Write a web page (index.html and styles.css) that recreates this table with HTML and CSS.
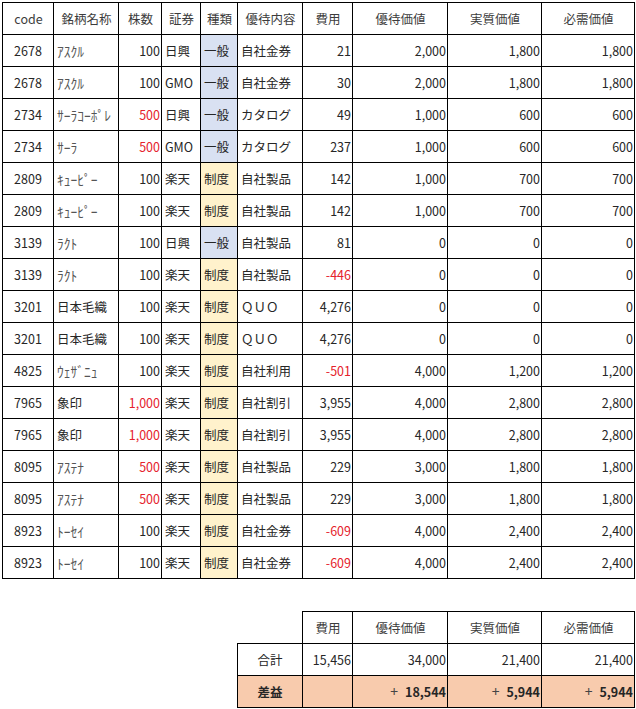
FILE: index.html
```html
<!DOCTYPE html>
<html lang="ja">
<head>
<meta charset="utf-8">
<title>優待一覧</title>
<link rel="stylesheet" href="styles.css">
</head>
<body>
<table class="sheet">
  <colgroup>
    <col class="w-code"><col class="w-name"><col class="w-qty"><col class="w-broker"><col class="w-kind"><col class="w-content"><col class="w-cost"><col class="w-val"><col class="w-val2"><col class="w-val3">
  </colgroup>
  <thead>
    <tr><th>code</th><th>銘柄名称</th><th>株数</th><th>証券</th><th>種類</th><th>優待内容</th><th>費用</th><th>優待価値</th><th>実質価値</th><th>必需価値</th></tr>
  </thead>
  <tbody>
    <tr><td class="c">2678</td><td class="nm">ｱｽｸﾙ</td><td class="r">100</td><td>日興</td><td class="ippan">一般</td><td>自社金券</td><td class="r">21</td><td class="r">2,000</td><td class="r">1,800</td><td class="r">1,800</td></tr>
    <tr><td class="c">2678</td><td class="nm">ｱｽｸﾙ</td><td class="r">100</td><td>GMO</td><td class="ippan">一般</td><td>自社金券</td><td class="r">30</td><td class="r">2,000</td><td class="r">1,800</td><td class="r">1,800</td></tr>
    <tr><td class="c">2734</td><td class="nm">ｻｰﾗｺｰﾎﾟﾚ</td><td class="r red">500</td><td>日興</td><td class="ippan">一般</td><td>カタログ</td><td class="r">49</td><td class="r">1,000</td><td class="r">600</td><td class="r">600</td></tr>
    <tr><td class="c">2734</td><td class="nm">ｻｰﾗ</td><td class="r red">500</td><td>GMO</td><td class="ippan">一般</td><td>カタログ</td><td class="r">237</td><td class="r">1,000</td><td class="r">600</td><td class="r">600</td></tr>
    <tr><td class="c">2809</td><td class="nm">ｷｭｰﾋﾟｰ</td><td class="r">100</td><td>楽天</td><td class="seido">制度</td><td>自社製品</td><td class="r">142</td><td class="r">1,000</td><td class="r">700</td><td class="r">700</td></tr>
    <tr><td class="c">2809</td><td class="nm">ｷｭｰﾋﾟｰ</td><td class="r">100</td><td>楽天</td><td class="seido">制度</td><td>自社製品</td><td class="r">142</td><td class="r">1,000</td><td class="r">700</td><td class="r">700</td></tr>
    <tr><td class="c">3139</td><td class="nm">ﾗｸﾄ</td><td class="r">100</td><td>日興</td><td class="ippan">一般</td><td>自社製品</td><td class="r">81</td><td class="r">0</td><td class="r">0</td><td class="r">0</td></tr>
    <tr><td class="c">3139</td><td class="nm">ﾗｸﾄ</td><td class="r">100</td><td>楽天</td><td class="seido">制度</td><td>自社製品</td><td class="r red">-446</td><td class="r">0</td><td class="r">0</td><td class="r">0</td></tr>
    <tr><td class="c">3201</td><td>日本毛織</td><td class="r">100</td><td>楽天</td><td class="seido">制度</td><td>ＱＵＯ</td><td class="r">4,276</td><td class="r">0</td><td class="r">0</td><td class="r">0</td></tr>
    <tr><td class="c">3201</td><td>日本毛織</td><td class="r">100</td><td>楽天</td><td class="seido">制度</td><td>ＱＵＯ</td><td class="r">4,276</td><td class="r">0</td><td class="r">0</td><td class="r">0</td></tr>
    <tr><td class="c">4825</td><td class="nm">ｳｪｻﾞﾆｭ</td><td class="r">100</td><td>楽天</td><td class="seido">制度</td><td>自社利用</td><td class="r red">-501</td><td class="r">4,000</td><td class="r">1,200</td><td class="r">1,200</td></tr>
    <tr><td class="c">7965</td><td>象印</td><td class="r red">1,000</td><td>楽天</td><td class="seido">制度</td><td>自社割引</td><td class="r">3,955</td><td class="r">4,000</td><td class="r">2,800</td><td class="r">2,800</td></tr>
    <tr><td class="c">7965</td><td>象印</td><td class="r red">1,000</td><td>楽天</td><td class="seido">制度</td><td>自社割引</td><td class="r">3,955</td><td class="r">4,000</td><td class="r">2,800</td><td class="r">2,800</td></tr>
    <tr><td class="c">8095</td><td class="nm">ｱｽﾃﾅ</td><td class="r red">500</td><td>楽天</td><td class="seido">制度</td><td>自社製品</td><td class="r">229</td><td class="r">3,000</td><td class="r">1,800</td><td class="r">1,800</td></tr>
    <tr><td class="c">8095</td><td class="nm">ｱｽﾃﾅ</td><td class="r red">500</td><td>楽天</td><td class="seido">制度</td><td>自社製品</td><td class="r">229</td><td class="r">3,000</td><td class="r">1,800</td><td class="r">1,800</td></tr>
    <tr><td class="c">8923</td><td class="nm">ﾄｰｾｲ</td><td class="r">100</td><td>楽天</td><td class="seido">制度</td><td>自社金券</td><td class="r red">-609</td><td class="r">4,000</td><td class="r">2,400</td><td class="r">2,400</td></tr>
    <tr><td class="c">8923</td><td class="nm">ﾄｰｾｲ</td><td class="r">100</td><td>楽天</td><td class="seido">制度</td><td>自社金券</td><td class="r red">-609</td><td class="r">4,000</td><td class="r">2,400</td><td class="r">2,400</td></tr>
  </tbody>
</table>

<table class="sheet summary">
  <colgroup>
    <col class="w-content"><col class="w-cost"><col class="w-val"><col class="w-val2"><col class="w-val3">
  </colgroup>
  <tr><td class="blank"></td><th>費用</th><th>優待価値</th><th>実質価値</th><th>必需価値</th></tr>
  <tr><td class="c">合計</td><td class="r">15,456</td><td class="r">34,000</td><td class="r">21,400</td><td class="r">21,400</td></tr>
  <tr class="profit"><td class="c b">差益</td><td></td><td class="r"><span class="plus">+</span><b>18,544</b></td><td class="r"><span class="plus">+</span><b>5,944</b></td><td class="r"><span class="plus">+</span><b>5,944</b></td></tr>
</table>
</body>
</html>
```

FILE: styles.css
```css
html, body {
  margin: 0;
  background: #ffffff;
}
body {
  padding: 2px;
  font-family: "Noto Sans CJK JP", "Liberation Sans", sans-serif;
  font-size: 12.5px;
  color: #262626;
}
.sheet {
  border-collapse: collapse;
  table-layout: fixed;
  width: 633px;
}
.sheet.summary {
  width: 398px;
  margin-left: 235px;
  margin-top: 32px;
}
.w-code { width: 51px; }
.w-name { width: 65px; }
.w-qty { width: 43px; }
.w-broker { width: 39px; }
.w-kind { width: 37px; }
.w-content { width: 65px; }
.w-cost { width: 50px; }
.w-val { width: 95px; }
.w-val2 { width: 94px; }
.w-val3 { width: 93px; }

.sheet th,
.sheet td {
  border: 1px solid #000;
  height: 32px;
  padding: 0 2px 0 3px;
  box-sizing: border-box;
  white-space: nowrap;
  overflow: hidden;
  text-align: left;
  vertical-align: middle;
  line-height: 16px;
}
.sheet th {
  font-weight: normal;
  text-align: center;
  color: #3c3c3c;
}
.sheet td.c { text-align: center; padding: 0 2px; }
.sheet td.r { text-align: right; padding-right: 1px; }
.sheet td.nm { font-size: 13.5px; color: #555; }
.red { color: #e5212b; }
.ippan { background: #d9e1f2; }
.seido { background: #fff2cc; }
.sheet td.blank { border: none; }
.profit td { background: #f8cbad; }
.b, .profit b { font-weight: bold; }
.plus { color: #444; margin-right: 7px; font-size: 14px; }
```
